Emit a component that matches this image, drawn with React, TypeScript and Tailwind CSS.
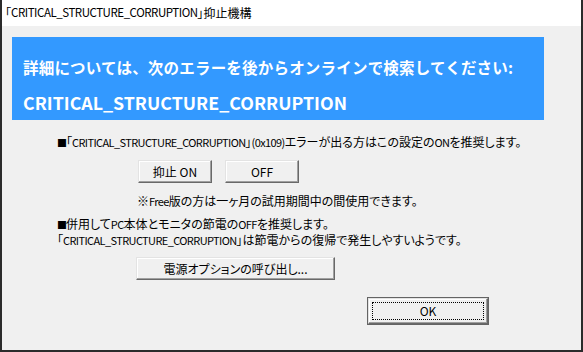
import React from 'react';

const ui = { fontFamily: '"Noto Sans CJK JP", "Noto Sans", sans-serif' };

const btn =
  'flex items-center justify-center bg-[#f0f0f0] border border-t-[#e3e3e3] border-l-[#e3e3e3] border-b-[#696969] border-r-[#696969] shadow-[inset_-1px_-1px_0_#a0a0a0,inset_1px_1px_0_#ffffff] text-[12px] text-black';

// narrower latin runs, like the dialog's UI font
const L: React.FC<{ children: React.ReactNode }> = ({ children }) => (
  <span className="text-[11px] tracking-[-0.6px]">{children}</span>
);

const Sq: React.FC = () => <span className="text-[10px] tracking-[-1px]">■</span>;

const App: React.FC = () => {
  return (
    <div
      className="w-[583px] h-[352px] flex flex-col border-2 border-t-0 border-[#2b2b2b] bg-[#f0f0f0] overflow-hidden [font-feature-settings:'palt']"
      style={ui}
    >
      {/* Title bar */}
      <div className="h-[26px] shrink-0 bg-white flex items-center pl-[3px] text-[12px] text-black whitespace-nowrap">
        「<span className="text-[11.5px] tracking-[-0.45px]">CRITICAL_STRUCTURE_CORRUPTION</span>」抑止機構
      </div>

      {/* Body */}
      <div className="flex flex-col pt-[11px] pl-[10px]">
        <div className="w-[532px] h-[83px] bg-[#3399ff] text-white font-bold pl-[11px] pt-[19px] flex flex-col [font-feature-settings:normal]">
          <div className="text-[15.5px] tracking-[0.2px] leading-[22px] whitespace-nowrap">
            詳細については、次のエラーを後からオンラインで検索してください:
          </div>
          <div className="text-[17.8px] leading-[22px] mt-[13px]">CRITICAL_STRUCTURE_CORRUPTION</div>
        </div>

        <div className="flex flex-col ml-[45px] text-[12px] text-black">
          <div className="leading-[16px] mt-[14px] whitespace-nowrap">
            <Sq />「<L>CRITICAL_STRUCTURE_CORRUPTION</L>」<L>(0x109)</L>エラーが出る方はこの設定の<L>ON</L>を推奨します。
          </div>

          <div className="flex gap-[13px] ml-[81px] mt-[9px]">
            <button className={`${btn} w-[74px] h-[23px]`}>抑止 ON</button>
            <button className={`${btn} w-[74px] h-[23px] text-[#a0a0a0]`} disabled>
              OFF
            </button>
          </div>

          <div className="leading-[16px] mt-[10px] ml-[80px] whitespace-nowrap">
            ※<L>Free</L>版の方は一ヶ月の試用期間中の間使用できます。
          </div>

          <div className="leading-[15px] mt-[7px] whitespace-nowrap">
            <Sq />併用して<L>PC</L>本体とモニタの節電の<L>OFF</L>を推奨します。
          </div>
          <div className="leading-[15px] whitespace-nowrap">
            「<L>CRITICAL_STRUCTURE_CORRUPTION</L>」は節電からの復帰で発生しやすいようです。
          </div>

          <button className={`${btn} w-[199px] h-[23px] ml-[79px] mt-[9px]`}>電源オプションの呼び出し...</button>

          <div className="ml-[310px] mt-[17px] w-[122px] h-[28px] border border-[#646464] flex">
            <button className={`${btn} flex-1 relative`}>
              <span className="absolute inset-[3px] border border-dotted border-black" />
              OK
            </button>
          </div>
        </div>
      </div>
    </div>
  );
};

export default App;
